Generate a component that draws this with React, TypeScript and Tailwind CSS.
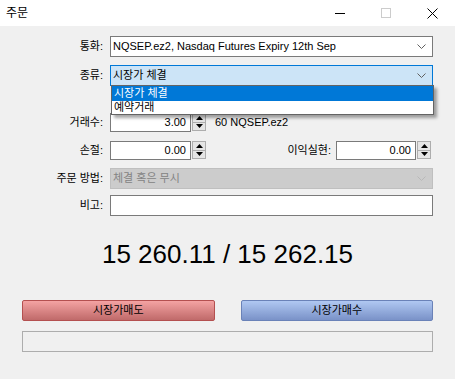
import React from "react";

const font = { fontFamily: '"Liberation Sans", "Noto Sans CJK KR", sans-serif' };

const Chevron = ({ color = "#606060" }: { color?: string }) => (
  <svg width="9" height="5" viewBox="0 0 9 5" className="shrink-0">
    <path d="M0.5 0.5 L4.5 4.5 L8.5 0.5" fill="none" stroke={color} strokeWidth="1" />
  </svg>
);

const Spin = () => (
  <div className="flex flex-col w-[14px] h-[18px] ml-[1px] gap-0">
    <div className="flex-1 flex items-center justify-center border border-[#adadad] bg-[#e5e5e5]">
      <svg width="7" height="4" viewBox="0 0 7 4">
        <path d="M3.5 0 L7 4 L0 4 Z" fill="#000" />
      </svg>
    </div>
    <div className="flex-1 flex items-center justify-center border border-t-0 border-[#adadad] bg-[#e5e5e5]">
      <svg width="7" height="4" viewBox="0 0 7 4">
        <path d="M0 0 L7 0 L3.5 4 Z" fill="#000" />
      </svg>
    </div>
  </div>
);

const Label = ({ children }: { children: React.ReactNode }) => (
  <div className="w-[104px] shrink-0 text-right pr-[1px] text-[11px] text-black">{children}</div>
);

const NumBox = ({ value, w = "w-[81px]" }: { value: string; w?: string }) => (
  <div className={`${w} h-[19px] bg-white border border-[#7a7a7a] flex items-center justify-end pr-[4px] text-[11px] text-black`}>
    {value}
  </div>
);

export default function App() {
  return (
    <div className="w-[455px] h-[379px] bg-[#f0f0f0] relative overflow-hidden" style={font}>
      {/* title bar */}
      <div className="h-[26px] bg-white flex items-center">
        <span className="ml-[6px] text-[12px] text-black">주문</span>
        <div className="flex-1" />
        <div className="w-[46px] flex justify-center">
          <div className="w-[10px] h-[1px] bg-black" />
        </div>
        <div className="w-[46px] flex justify-center">
          <div className="w-[10px] h-[10px] border border-[#cccccc]" />
        </div>
        <div className="w-[46px] flex justify-center">
          <svg width="11" height="11" viewBox="0 0 11 11">
            <path d="M0.5 0.5 L10.5 10.5 M10.5 0.5 L0.5 10.5" stroke="#000" strokeWidth="1" />
          </svg>
        </div>
      </div>

      <div className="flex flex-col pr-[22px]">
        {/* 통화 */}
        <div className="flex items-center mt-[10px] h-[21px]">
          <Label>통화:</Label>
          <div className="ml-[6px] flex-1 h-[21px] bg-white border border-[#7a7a7a] flex items-center pl-[2px] pr-[6px] text-[11px] text-black">
            <span className="flex-1 whitespace-nowrap">NQSEP.ez2, Nasdaq Futures Expiry 12th Sep</span>
            <Chevron />
          </div>
        </div>

        {/* 종류 */}
        <div className="flex items-center mt-[8px] h-[21px]">
          <Label>종류:</Label>
          <div className="ml-[6px] flex-1 h-[21px] bg-[#cce4f7] border border-[#0078d7] flex items-center pl-[2px] pr-[6px] text-[11px] text-black">
            <span className="flex-1">시장가 체결</span>
            <Chevron />
          </div>
        </div>

        {/* 거래수 */}
        <div className="flex items-center mt-[26px] h-[20px]">
          <Label>거래수:</Label>
          <div className="ml-[6px] flex items-center">
            <NumBox value="3.00" />
            <Spin />
            <span className="ml-[9px] text-[11px] text-black">60 NQSEP.ez2</span>
          </div>
        </div>

        {/* 손절 / 이익실현 */}
        <div className="flex items-center mt-[8px] h-[20px]">
          <Label>손절:</Label>
          <div className="ml-[6px] flex items-center">
            <NumBox value="0.00" />
            <Spin />
          </div>
          <div className="flex-1" />
          <span className="text-[11px] text-black">이익실현:</span>
          <div className="ml-[5px] flex items-center mr-[2px]">
            <NumBox value="0.00" w="w-[80px]" />
            <Spin />
          </div>
        </div>

        {/* 주문 방법 */}
        <div className="flex items-center mt-[8px] h-[21px]">
          <Label>주문 방법:</Label>
          <div className="ml-[6px] flex-1 h-[21px] bg-[#cccccc] border border-[#bfbfbf] flex items-center pl-[2px] pr-[6px] text-[11px] text-[#838383]">
            <span className="flex-1">체결 혹은 무시</span>
            <Chevron color="#b8b8b8" />
          </div>
        </div>

        {/* 비고 */}
        <div className="flex items-center mt-[6px] h-[21px]">
          <Label>비고:</Label>
          <div className="ml-[6px] flex-1 h-[21px] bg-white border border-[#7a7a7a]" />
        </div>
      </div>

      {/* price */}
      <div className="mt-[23px] h-[30px] leading-[30px] text-center text-[26px] text-black">
        15 260.11 / 15 262.15
      </div>

      {/* buttons */}
      <div className="flex px-[22px] mt-[31px] gap-[26px]">
        <button className="flex-1 h-[21px] rounded-[2px] border border-[#b45050] bg-gradient-to-b from-[#f4a3a3] to-[#c06a6a] text-[11px] text-black">
          시장가매도
        </button>
        <button className="flex-1 h-[21px] rounded-[2px] border border-[#6a82b8] bg-gradient-to-b from-[#b0c8f2] to-[#7a92c8] text-[11px] text-black">
          시장가매수
        </button>
      </div>
      <div className="mx-[22px] mt-[10px] h-[21px] border border-[#adadad] bg-[#f0f0f0]" />

      {/* dropdown list */}
      <div className="absolute left-[111px] top-[85px] w-[323px] bg-white border border-[#646464] shadow-[3px_3px_3px_rgba(0,0,0,0.35)] text-[11px]">
        <div className="h-[15px] bg-[#0078d7] text-white flex items-center pl-[2px]">시장가 체결</div>
        <div className="h-[13px] text-black flex items-center pl-[2px]">예약거래</div>
      </div>
    </div>
  );
}
